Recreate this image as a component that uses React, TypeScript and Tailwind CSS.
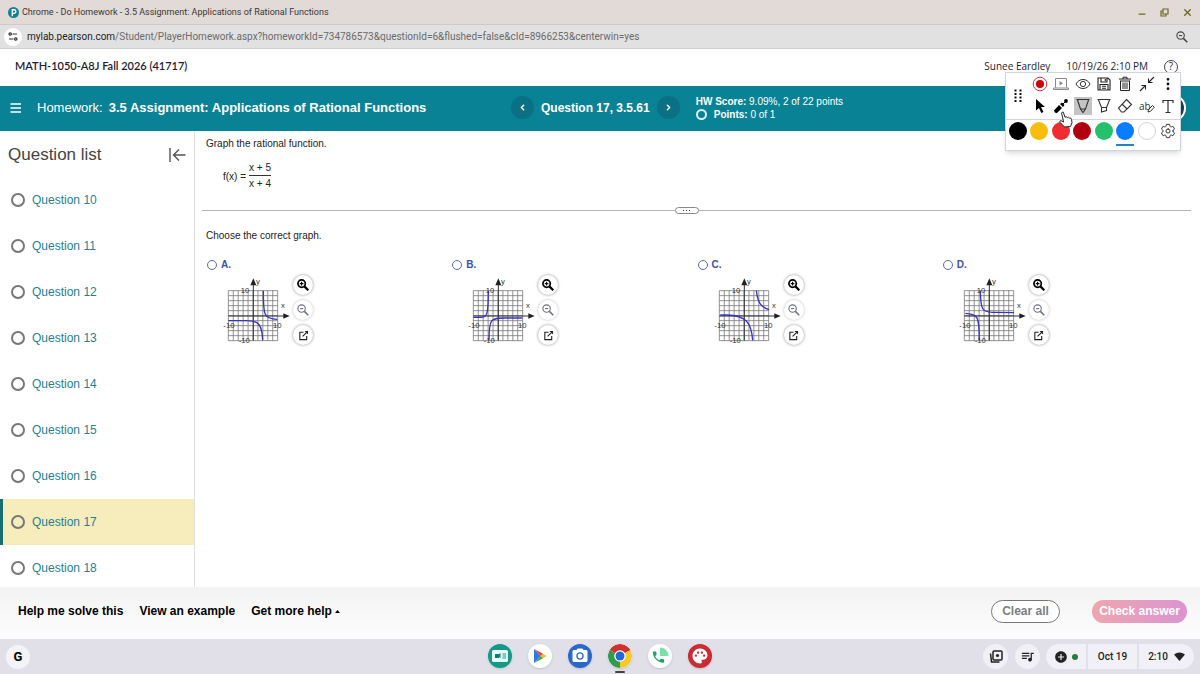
import type { ReactNode } from 'react';
import { ChevronLeft, ChevronRight, Minus, X, MoreVertical } from 'lucide-react';
import { MdQueueMusic, MdAddCircle, MdPhone, MdPalette, MdPhotoCamera } from 'react-icons/md';
import { IoSettingsOutline } from 'react-icons/io5';

const questions = [10, 11, 12, 13, 14, 15, 16, 17, 18];
const current = 17;

// curves are drawn in the same units as the grid in Graph
const choices = [
  { letter: 'A', curves: ['M85 197 H140 C176 197 186 208 188 256', 'M190 107 C190 178 190 192 232 193'] },
  { letter: 'B', curves: ['M85 187 H108 C126 187 130 180 130 107', 'M132 256 C132 190 138 189 180 189 H232'] },
  { letter: 'C', curves: ['M88 180 H108 C164 182 181 200 185 256', 'M196 107 C200 140 208 156 234 164'] },
  { letter: 'D', curves: ['M88 175 C126 177 130 184 130 256', 'M133 107 C134 164 138 171 170 172 L234 173'] },
];

const inks = [
  { name: 'Black', bg: 'bg-black' },
  { name: 'Yellow', bg: 'bg-[#f9bd0d]' },
  { name: 'Red', bg: 'bg-[#f02c33]' },
  { name: 'Dark red', bg: 'bg-[#b0000f]' },
  { name: 'Green', bg: 'bg-[#25c06b]' },
  { name: 'Blue', bg: 'bg-[#0a7cff]', active: true },
  { name: 'White', bg: 'bg-white border border-gray-300' },
];

function Graph({ curves }: { curves: string[] }) {
  const steps = Array.from({ length: 11 }, (_, i) => i);
  return (
    <svg width="70" height="68" viewBox="63 66 210 204" fill="none" className="shrink-0">
      <g stroke="#777" strokeWidth="2.4">
        {steps.map((i) => (
          <path key={i} d={`M${85 + i * 14.8} 107 V257 M85 ${107 + i * 15} H233`} />
        ))}
      </g>
      <path d="M160 85 V257 M85 183 H255" stroke="#333" strokeWidth="3" />
      <path d="M151 91 L160 70 L169 91 Z M250 175 L269 183 L250 191 Z" fill="#222" />
      {curves.map((d) => (
        <path key={d} d={d} stroke="#3a34bd" strokeWidth="4" />
      ))}
      <g fill="#333" fontSize="23" fontFamily="Liberation Sans, Arial, sans-serif">
        <text x="168" y="86">y</text>
        <text x="243" y="159">x</text>
        <text x="122" y="115">10</text>
        <text x="70" y="219">-10</text>
        <text x="219" y="219">10</text>
        <text x="116" y="264">-10</text>
      </g>
    </svg>
  );
}

function Lens({ plus, bold }: { plus?: boolean; bold?: boolean }) {
  return (
    <svg width="12" height="12" viewBox="0 0 12 12" fill="none" stroke="currentColor" strokeWidth={bold ? 1.7 : 1.1}>
      <circle cx="4.6" cy="4.6" r="3.7" />
      <path d="M7.4 7.4 L11.3 11.3" strokeWidth={bold ? 2.2 : 1.5} />
      <path d={plus ? 'M2.8 4.6 H6.4 M4.6 2.8 V6.4' : 'M3 4.6 H6.2'} strokeWidth="1.1" />
    </svg>
  );
}

function PopOutIcon() {
  return (
    <svg width="11" height="11" viewBox="0 0 12 12" fill="none" stroke="#222" strokeWidth="1.2">
      <path d="M6 2.5 H2 V10.5 H9.5 V6.5" />
      <path d="M5 7 L9.5 2.5" />
      <path d="M7 1.2 H11 V5 Z" fill="#222" stroke="none" />
    </svg>
  );
}

function RoundButton({ label, children, faded }: { label: string; children: ReactNode; faded?: boolean }) {
  return (
    <button
      aria-label={label}
      className={`flex size-5 items-center justify-center rounded-full bg-white ${faded ? 'text-gray-500 shadow-[0_0_3px_#bbb]' : 'text-black shadow-[0_0_3px_#888]'}`}
    >
      {children}
    </button>
  );
}

function Tool({ label, active, children }: { label: string; active?: boolean; children: ReactNode }) {
  return (
    <button aria-label={label} className={`flex h-[18px] w-[18px] items-center justify-center ${active ? 'bg-[#c4c4c4]' : ''}`}>
      {children}
    </button>
  );
}

function AnnotationToolbar() {
  return (
    <div className="absolute top-[72px] right-[19px] w-[176px] border border-gray-300 bg-white text-[#333] shadow-md">
      <div className="flex border-b border-gray-300 px-px">
        <button aria-label="Move toolbar" className="flex w-[22px] items-center justify-center">
          <svg width="8" height="14" viewBox="0 0 8 14" fill="#111">
            {[1.5, 5, 8.5, 12].map((y) => (
              <path key={y} d={`M0.5 ${y - 1} h2 v2 h-2 Z M5.5 ${y - 1} h2 v2 h-2 Z`} />
            ))}
          </svg>
        </button>
        <div className="grid flex-1 grid-cols-7 justify-items-center gap-y-1 pt-0.5 pb-1">
          <Tool label="Record">
            <svg width="16" height="16" viewBox="0 0 16 16">
              <circle cx="8" cy="8" r="6.8" fill="#fff" stroke="#d8343c" strokeWidth="1" />
              <circle cx="8" cy="8" r="4" fill="#c8000c" />
            </svg>
          </Tool>
          <Tool label="Presentation">
            <svg width="16" height="14" viewBox="0 0 16 14" fill="none" stroke="#888" strokeWidth="1">
              <path d="M2.5 10.5 V1.5 H13.5 V10.5 M0.5 11 H15.5 V12.5 H0.5 Z" />
              <path d="M6.5 4 L10 6.2 L6.5 8.5 Z" fill="#888" stroke="none" />
            </svg>
          </Tool>
          <Tool label="Show">
            <svg width="16" height="14" viewBox="0 0 16 14" fill="none" stroke="#333" strokeWidth="1">
              <path d="M1 7 C4 1 12 1 15 7 C12 13 4 13 1 7 Z" />
              <circle cx="8" cy="7" r="2.6" />
            </svg>
          </Tool>
          <Tool label="Save">
            <svg width="14" height="14" viewBox="0 0 14 14" fill="none" stroke="#222" strokeWidth="1.1">
              <path d="M1 1 H11 L13 3 V13 H1 Z M4 1 V5 H10 V1 M3 13 V7.5 H11 V13 M5 9.3 H9 M5 11.2 H9 M8.3 2 V4" />
            </svg>
          </Tool>
          <Tool label="Delete">
            <svg width="14" height="16" viewBox="0 0 14 16" fill="none" stroke="#222" strokeWidth="1">
              <path d="M1 3 H13 M5 3 V1.2 H9 V3 M2 5 H12 M2.5 5 V14.5 H11.5 V5 M5 6.5 V13 M7 6.5 V13 M9 6.5 V13" />
            </svg>
          </Tool>
          <Tool label="Collapse">
            <svg width="16" height="16" viewBox="0 0 16 16" fill="none" stroke="#222" strokeWidth="1.1">
              <path d="M15 1 L9.5 6.5 M9.5 2.5 V6.5 H13.5 M1 15 L6.5 9.5 M2.5 9.5 H6.5 V13.5" />
            </svg>
          </Tool>
          <Tool label="More">
            <MoreVertical size={16} strokeWidth={2.2} color="#111" />
          </Tool>
          <Tool label="Select">
            <svg width="12" height="16" viewBox="0 0 12 16" fill="#000">
              <path d="M2 1 L11 9 H7 L9.5 14 L7.3 15 L5 10 L2 12.5 Z" />
            </svg>
          </Tool>
          <Tool label="Laser pointer">
            <svg width="16" height="16" viewBox="0 0 16 16" fill="#000">
              <path d="M1 12.5 L6 7 L9 10 L4 15 Q1.5 15.5 1 12.5 Z M7 6 L9 4.5 L11.5 7 L10 9 Z" />
              <path d="M9.5 6.5 L13 3" stroke="#000" strokeWidth="1" />
              <circle cx="13" cy="3" r="1.9" />
            </svg>
          </Tool>
          <Tool label="Pen" active>
            <svg width="16" height="16" viewBox="0 0 16 16" fill="none" stroke="#333" strokeWidth="1.1">
              <path d="M1.5 1.5 H14.5 M2.5 2 L5.5 11 L8 14.5 L10.5 11 L13.5 2 M5.5 11 H10.5" />
            </svg>
          </Tool>
          <Tool label="Highlighter">
            <svg width="16" height="16" viewBox="0 0 16 16" fill="none" stroke="#333" strokeWidth="1.1">
              <path d="M1.5 1.5 H14.5 M2.5 2 L5.5 9.5 H10.5 L13.5 2 M5.5 9.5 V14 L10.5 12.5 V9.5" />
            </svg>
          </Tool>
          <Tool label="Eraser">
            <svg width="16" height="16" viewBox="0 0 16 16" fill="none" stroke="#333" strokeWidth="1.1">
              <path d="M9.5 1.5 L14.5 6.5 L7 14 H4.5 L1.5 10 Z M5 6 L10.2 11" />
            </svg>
          </Tool>
          <Tool label="Text style">
            <span className="font-['Open_Sans',sans-serif] text-[10px]">ab</span>
            <svg width="8" height="10" viewBox="0 0 8 10" fill="none" stroke="#333" strokeWidth="1" className="mt-1 -ml-1 shrink-0">
              <path d="M1 9 L1.5 6.5 L5.5 2.5 L7.3 4.3 L3.5 8.3 Z" />
            </svg>
          </Tool>
          <Tool label="Text">
            <svg width="14" height="15" viewBox="0 0 14 15" fill="none" stroke="#333" strokeWidth="1.2">
              <path d="M2 4 V1.5 H12 V4 M7 1.5 V13.5 M4.5 13.5 H9.5" />
            </svg>
          </Tool>
        </div>
      </div>
      <div className="grid h-[30px] grid-cols-8 justify-items-center px-px pt-0.5">
        {inks.map((ink) => (
          <button
            key={ink.name}
            aria-label={ink.name}
            className={`flex h-6 flex-col ${ink.active ? 'border-b-2 border-[#2381c4]' : ''}`}
          >
            <span className={`size-[18px] rounded-full ${ink.bg}`}></span>
          </button>
        ))}
        <button aria-label="Settings" className="flex h-[18px] items-center">
          <IoSettingsOutline size={16} />
        </button>
      </div>
      {/* mouse pointer over the laser tool */}
      <svg width="14" height="17" viewBox="0 0 14 17" className="absolute top-[38px] left-[53px]" fill="#fff" stroke="#222" strokeWidth="1">
        <path d="M4.2 9 L2.6 2.2 Q2.8 0.7 4.3 1.2 L6 6.2 Q7.5 5.2 8.2 6.5 Q9.7 5.7 10.4 7 Q12.2 6.4 12.5 8.5 L13 11.5 L11.5 15.5 L5.5 16 L1 11.3 Q0.3 9.8 2 9.6 L4.5 11 Z" />
      </svg>
    </div>
  );
}

function ShelfApp({ label, bg, open, children }: { label: string; bg: string; open?: boolean; children: ReactNode }) {
  return (
    <button aria-label={label} className="flex h-[30px] flex-col items-center gap-[3px]">
      <span className={`flex size-6 items-center justify-center overflow-hidden rounded-full shadow-sm ${bg}`}>{children}</span>
      {open && <span className="h-0.5 w-2.5 shrink-0 rounded bg-[#444]"></span>}
    </button>
  );
}

export default function App() {
  return (
    <div className="relative flex h-screen flex-col overflow-hidden bg-white font-['Liberation_Sans',Arial,sans-serif] text-black">
      <div className="flex h-[25px] shrink-0 items-center border-b border-[#cfcaca] bg-[#e1dad6] pr-[7px] pl-2 font-['Roboto','Liberation_Sans',sans-serif]">
        <svg width="11" height="11" viewBox="0 0 12 12" className="mr-[3px]">
          <circle cx="6" cy="6" r="6" fill="#12809a" />
          <path d="M4.7 10 V3 H6.6 A1.9 1.9 0 0 1 6.6 6.9 H5" fill="none" stroke="#fff" strokeWidth="1.5" />
        </svg>
        <span className="pt-px text-[9px] text-[#3a3735]">Chrome - Do Homework - 3.5 Assignment: Applications of Rational Functions</span>
        <div className="ml-auto flex items-center gap-[13px] text-[#6f6524]">
          <button aria-label="Minimize"><Minus size={10} strokeWidth={3} className="mt-1" /></button>
          <button aria-label="Restore">
            <svg width="9" height="9" viewBox="0 0 9 9" fill="none" stroke="currentColor" strokeWidth="1.2">
              <path d="M3 1 H8 V6 H3 Z M3 3 H1 V8 H6 V6" />
            </svg>
          </button>
          <button aria-label="Close"><X size={11} strokeWidth={3} /></button>
        </div>
      </div>

      <div className="flex h-6 shrink-0 items-center border-b border-[#d0d0d0] bg-[#e2e1e1] pr-3 pl-1 font-['Roboto','Liberation_Sans',sans-serif]">
        <button aria-label="Site information" className="mr-[5px] flex size-[18px] items-center justify-center rounded-full bg-white">
          <svg width="10" height="9" viewBox="0 0 10 9" fill="none" stroke="#333" strokeWidth="1.2">
            <path d="M4.5 2 H9 M1 7 H5.5" />
            <circle cx="2.2" cy="2" r="1.2" />
            <circle cx="7.8" cy="7" r="1.2" />
          </svg>
        </button>
        <span className="text-[10px] text-[#6a6a6a]">
          <span className="text-[#222]">mylab.pearson.com</span>/Student/PlayerHomework.aspx?homeworkId=734786573&amp;questionId=6&amp;flushed=false&amp;cId=8966253&amp;centerwin=yes
        </span>
        <button aria-label="Zoom" className="ml-auto text-[#444]"><Lens /></button>
      </div>

      <header className="flex h-[37px] shrink-0 items-center pr-[22px] pb-0.5 pl-[15px] text-[#1b1b33]">
        <h1 className="font-[Lato,sans-serif] text-[11px] font-semibold">MATH-1050-A8J Fall 2026 (41717)</h1>
        <div className="ml-auto flex items-center gap-4 font-['Open_Sans',sans-serif] text-[10px]">
          <span>Sunee Eardley</span>
          <span>10/19/26 2:10 PM</span>
          <button aria-label="Help" className="flex size-[14px] items-center justify-center rounded-full border border-[#444]">?</button>
        </div>
      </header>

      <div className="flex h-[45px] shrink-0 items-center bg-[#0a8296] px-[10px] pb-0.5 text-white">
        <div className="flex w-[501px] items-center">
          <button aria-label="Menu" className="mr-[15px]">
            <svg width="12" height="10" viewBox="0 0 12 10" stroke="#fff" strokeWidth="1.4">
              <path d="M0.5 1 H11 M0.5 5 H11 M0.5 9 H11" />
            </svg>
          </button>
          <span className="mr-1.5 text-[13px]">Homework:</span>
          <span className="text-[13px] font-bold">3.5 Assignment: Applications of Rational Functions</span>
        </div>
        <div className="flex items-center gap-[7px]">
          <button aria-label="Previous question" className="flex size-[23px] items-center justify-center rounded-full bg-[#0b7084]">
            <ChevronLeft size={9} strokeWidth={4} />
          </button>
          <span className="text-[12px] font-bold">Question 17, 3.5.61</span>
          <button aria-label="Next question" className="flex size-[23px] items-center justify-center rounded-full bg-[#0b7084]">
            <ChevronRight size={9} strokeWidth={4} />
          </button>
        </div>
        <div className="ml-4 text-[10px] leading-[13px]">
          <p><b>HW Score:</b> 9.09%, 2 of 22 points</p>
          <p className="flex items-center">
            <span className="mr-[7px] size-[11px] rounded-full border-2 border-[#d5f2f5]"></span>
            <span><b>Points:</b> 0 of 1</span>
          </p>
        </div>
        <button aria-label="Account" className="mr-1 ml-auto size-7 rounded-full border-2 border-white bg-[#163f54]"></button>
      </div>

      <main className="flex min-h-0 flex-1">
        <nav className="flex w-[195px] shrink-0 flex-col overflow-hidden border-r border-[#ddd]">
          <div className="flex h-[46px] shrink-0 items-center justify-between px-2 pt-0.5">
            <h2 className="text-[17px] text-[#444]">Question list</h2>
            <button aria-label="Collapse question list">
              <svg width="17" height="14" viewBox="0 0 17 14" fill="none" stroke="#555" strokeWidth="1.4">
                <path d="M1 0 V14 M16.5 7 H4.5 M10 1.5 L4.5 7 L10 12.5" />
              </svg>
            </button>
          </div>
          <ul>
            {questions.map((n) => (
              <li key={n}>
                <a
                  href={`#question-${n}`}
                  className={`flex h-[46px] items-center border-l-3 pl-2 text-[12px] text-[#1f7f93] ${n === current ? 'border-[#15706f] bg-[#f7ecbb]' : 'border-transparent'}`}
                >
                  <span className="mr-[7px] size-[14px] rounded-full border-2 border-[#777]"></span>
                  Question {n}
                </a>
              </li>
            ))}
          </ul>
        </nav>

        <section className="min-w-0 flex-1 pt-[6px] pr-[13px] pl-[11px] text-[10px] text-[#222]">
          <p className="leading-[14px]">Graph the rational function.</p>
          <div className="mt-[10px] ml-[17px] flex items-center gap-[3px]">
            <span>f(x) =</span>
            <div className="flex flex-col text-center">
              <span className="border-b border-[#333] leading-[14px]">x + 5</span>
              <span className="leading-[15px]">x + 4</span>
            </div>
          </div>
          <div className="-mx-1 mt-4 flex items-center">
            <hr className="flex-[24] border-[#b5b5b5]" />
            <button aria-label="Resize panels" className="flex h-[7px] w-6 items-center justify-center gap-0.5 rounded-full border border-[#888] bg-white">
              <span className="size-px bg-[#333]"></span>
              <span className="size-px bg-[#333]"></span>
              <span className="size-px bg-[#333]"></span>
            </button>
            <hr className="flex-[25] border-[#b5b5b5]" />
          </div>
          <fieldset>
            <legend className="pt-[15px] leading-[14px]">Choose the correct graph.</legend>
            <div className="mt-3.5 grid grid-cols-4">
              {choices.map((choice) => (
                <div key={choice.letter}>
                  <label className="flex items-center font-bold text-[#3c4fae]">
                    <input
                      type="radio"
                      name="graph"
                      className="mr-1 ml-px size-[10px] appearance-none rounded-full border border-[#5a68b8] checked:bg-[#5a68b8]"
                    />
                    {choice.letter}.
                  </label>
                  <div className="mt-0.5 ml-[15px] flex items-start gap-0.5 pt-px">
                    <div className="pt-0.5"><Graph curves={choice.curves} /></div>
                    <div className="flex flex-col gap-[5px]">
                      <RoundButton label="Zoom in"><Lens plus bold /></RoundButton>
                      <RoundButton label="Zoom out" faded><Lens /></RoundButton>
                      <RoundButton label="Open larger graph"><PopOutIcon /></RoundButton>
                    </div>
                  </div>
                </div>
              ))}
            </div>
          </fieldset>
        </section>
      </main>

      <footer className="flex h-[52px] shrink-0 items-center bg-linear-to-b from-[#f3f3f3] to-[#fdfdfd] pr-[13px] pb-1 pl-[18px] text-[12px] font-bold">
        <div className="flex gap-4">
          <button>Help me solve this</button>
          <button>View an example</button>
          <button className="flex items-center gap-[3px]">
            Get more help
            <svg width="5" height="3" viewBox="0 0 5 3"><path d="M0 3 L2.5 0 L5 3 Z" /></svg>
          </button>
        </div>
        <button className="ml-auto h-[23px] w-[69px] rounded-full border border-[#777] bg-white text-[#7b8083]">Clear all</button>
        <button className="ml-8 h-[23px] w-[95px] rounded-full bg-linear-to-r from-[#efa6b0] to-[#dc93cf] text-white">Check answer</button>
      </footer>

      <div className="grid h-[35px] shrink-0 grid-cols-[1fr_auto_1fr] items-center bg-[#e1e0e9] px-1.5 font-['Roboto','Liberation_Sans',sans-serif]">
        <button aria-label="Launcher" className="flex size-6 items-center justify-center rounded-full bg-[#f3f3f8] text-[13px] font-bold">G</button>
        <div className="flex gap-4 pt-[5px]">
          <ShelfApp label="Screencast" bg="bg-[#129a87]">
            <svg width="16" height="12" viewBox="0 0 16 12">
              <rect width="16" height="12" rx="1.5" fill="#e9fffb" />
              <path d="M3 4 H7 L8.5 3 V8 L7 7 V8 H3 Z" fill="#0d7f70" />
              <path d="M10.5 4 H14 M10.5 6 H14 M10.5 8 H14" stroke="#129a87" />
            </svg>
          </ShelfApp>
          <ShelfApp label="Play Store" bg="bg-white">
            <svg width="14" height="16" viewBox="0 0 14 16">
              <path d="M1 1 L7.5 8 L1 15 Z" fill="#2f78e8" />
              <path d="M1 1 L10 5.7 L7.5 8 Z" fill="#e2403a" />
              <path d="M1 15 L10 10.3 L7.5 8 Z" fill="#35a552" />
              <path d="M10 5.7 L13.5 8 L10 10.3 L7.5 8 Z" fill="#f8bd17" />
            </svg>
          </ShelfApp>
          <ShelfApp label="Camera" bg="bg-[#2a68cc]">
            <MdPhotoCamera size={18} color="#fff" />
          </ShelfApp>
          <ShelfApp label="Chrome" bg="bg-white" open>
            <svg width="24" height="24" viewBox="0 0 24 24">
              <path d="M12 12 L1.6 6 A12 12 0 0 1 22.4 6 Z" fill="#d0322b" />
              <path d="M12 12 L22.4 6 A12 12 0 0 1 12 24 Z" fill="#f6c92b" />
              <path d="M12 12 L12 24 A12 12 0 0 1 1.6 6 Z" fill="#319b4b" />
              <path d="M12 6.3 H22.6 L21 4 H10 Z" fill="#d0322b" />
              <circle cx="12" cy="12" r="5.8" fill="#fff" />
              <circle cx="12" cy="12" r="4.5" fill="#2367d9" />
            </svg>
          </ShelfApp>
          <ShelfApp label="Phone Hub" bg="bg-white">
            <svg width="20" height="20" viewBox="0 0 20 20">
              <path d="M10 1.5 A8.5 8.5 0 0 1 18.5 10 H10 Z" fill="#7be0aa" />
              <g transform="translate(1 3.5)"><MdPhone size={15} color="#1fa267" /></g>
            </svg>
          </ShelfApp>
          <ShelfApp label="Canvas" bg="bg-[#cc2b33]">
            <MdPalette size={18} color="#fff" />
          </ShelfApp>
        </div>
        <div className="flex items-center justify-end text-[10px] font-medium text-[#222]">
          <button aria-label="Screen capture" className="mr-[7px] flex size-[25px] items-center justify-center rounded-full bg-[#f0f0f6]">
            <svg width="14" height="13" viewBox="0 0 14 13" fill="none" stroke="#222" strokeWidth="1.5">
              <rect x="4" y="1" width="9" height="9" rx="1" />
              <path d="M1.5 3.5 L2.5 12 H10.5" />
              <circle cx="8.5" cy="5.5" r="1.6" fill="#222" stroke="none" />
            </svg>
          </button>
          <button aria-label="Media controls" className="mr-[6px] flex size-[25px] items-center justify-center rounded-full bg-[#f0f0f6]">
            <MdQueueMusic size={15} />
          </button>
          <button aria-label="Notifications" className="mr-0.5 flex h-[25px] w-10 items-center justify-center gap-1 rounded-l-full bg-[#f0f0f6]">
            <MdAddCircle size={14} />
            <span className="size-1.5 rounded-full bg-[#23803b]"></span>
          </button>
          <button className="mr-0.5 h-[25px] w-[49px] bg-[#f0f0f6]">Oct 19</button>
          <button className="flex h-[25px] w-[55px] items-center justify-center gap-1.5 rounded-r-full bg-[#f0f0f6]">
            2:10
            <svg width="11" height="9" viewBox="0 0 11 9" fill="#222">
              <path d="M0 2.6 Q5.5 -1.8 11 2.6 L5.5 9 Z" />
            </svg>
          </button>
        </div>
      </div>

      <AnnotationToolbar />
    </div>
  );
}
